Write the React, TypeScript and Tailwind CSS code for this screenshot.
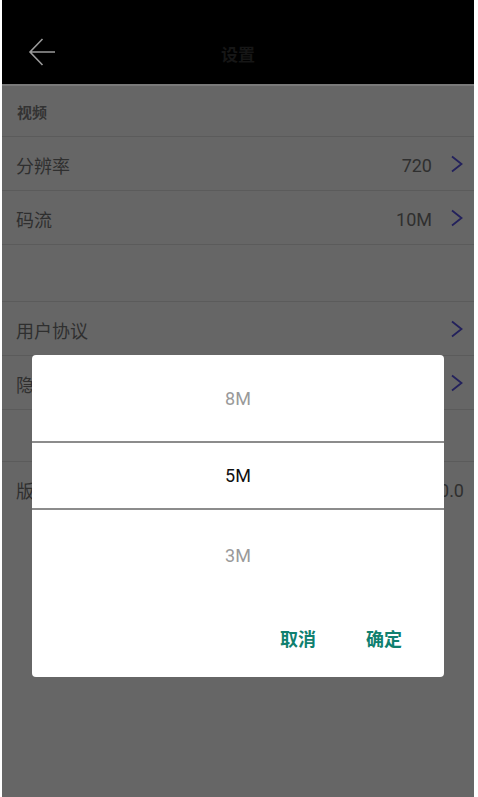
import React from "react";

const font = { fontFamily: '"Noto Sans CJK SC", Roboto, sans-serif' };

function Chevron() {
  return (
    <svg width="14" height="18" viewBox="0 0 14 18" className="ml-[18px]">
      <path d="M2 1.5 L11.5 9 L2 16.5" fill="none" stroke="#23215c" strokeWidth="1.8" />
    </svg>
  );
}

function Row({ label, value, chevron = true, last = false }: { label: string; value?: string; chevron?: boolean; last?: boolean }) {
  return (
    <div className={last ? "flex h-[54px] items-center pl-[14px] pr-[10px]" : "flex h-[54px] items-center border-b border-[#5b5b5b] pl-[14px] pr-[10px]"}>
      <span className="flex-1 pt-[3px] text-[18px] text-[#2f2f2f]">{label}</span>
      {value && <span className="pt-[3px] text-[18px] text-[#2f2f2f]" style={{ fontFamily: "Roboto, sans-serif" }}>{value}</span>}
      {chevron && <Chevron />}
    </div>
  );
}

export default function App() {
  return (
    <div className="relative h-[797px] w-[478px] overflow-hidden bg-white" style={font}>
      <div className="ml-[2px] h-full w-[472px] bg-[#666666]">
        <div className="relative flex h-[86px] justify-center border-b-2 border-[#7a7a7a] bg-black pt-[42px]">
          <svg width="30" height="30" viewBox="0 0 30 30" className="absolute left-[25px] top-[37px]">
            <path d="M28 15 L3 15 M15.5 2 L3 15 L15.5 28" fill="none" stroke="#9a9a9a" strokeWidth="1.6" />
          </svg>
          <span className="text-[17px] font-bold leading-[24px] text-[#161616]">设置</span>
        </div>
        <div className="flex h-[51px] items-center border-b border-[#5b5b5b] pl-[15px] pt-[2px] text-[15px] font-bold text-[#333333]">
          视频
        </div>
        <Row label="分辨率" value="720" />
        <Row label="码流" value="10M" />
        <div className="h-[57px] border-b border-[#5b5b5b]" />
        <Row label="用户协议" />
        <Row label="隐私政策" />
        <div className="h-[52px] border-b border-[#5b5b5b]" />
        <Row label="版本号" value="V1.0.0" chevron={false} last />
      </div>

      <div className="absolute left-[32px] top-[355px] flex h-[322px] w-[412px] flex-col rounded-[4px] bg-white" style={{ fontFamily: "Roboto, sans-serif" }}>
        <div className="flex h-[86px] items-center justify-center text-[18px] text-[#9a9a9a]">8M</div>
        <div className="flex h-[69px] items-center justify-center border-y-2 border-[#8c8c8c] text-[18px] text-[#111111]">5M</div>
        <div className="flex h-[90px] items-center justify-center text-[18px] text-[#9a9a9a]">3M</div>
        <div className="flex h-[77px] items-center justify-end gap-[50px] pr-[42px] text-[18px] font-bold text-[#10806f]" style={font}>
          <span>取消</span>
          <span>确定</span>
        </div>
      </div>
    </div>
  );
}
